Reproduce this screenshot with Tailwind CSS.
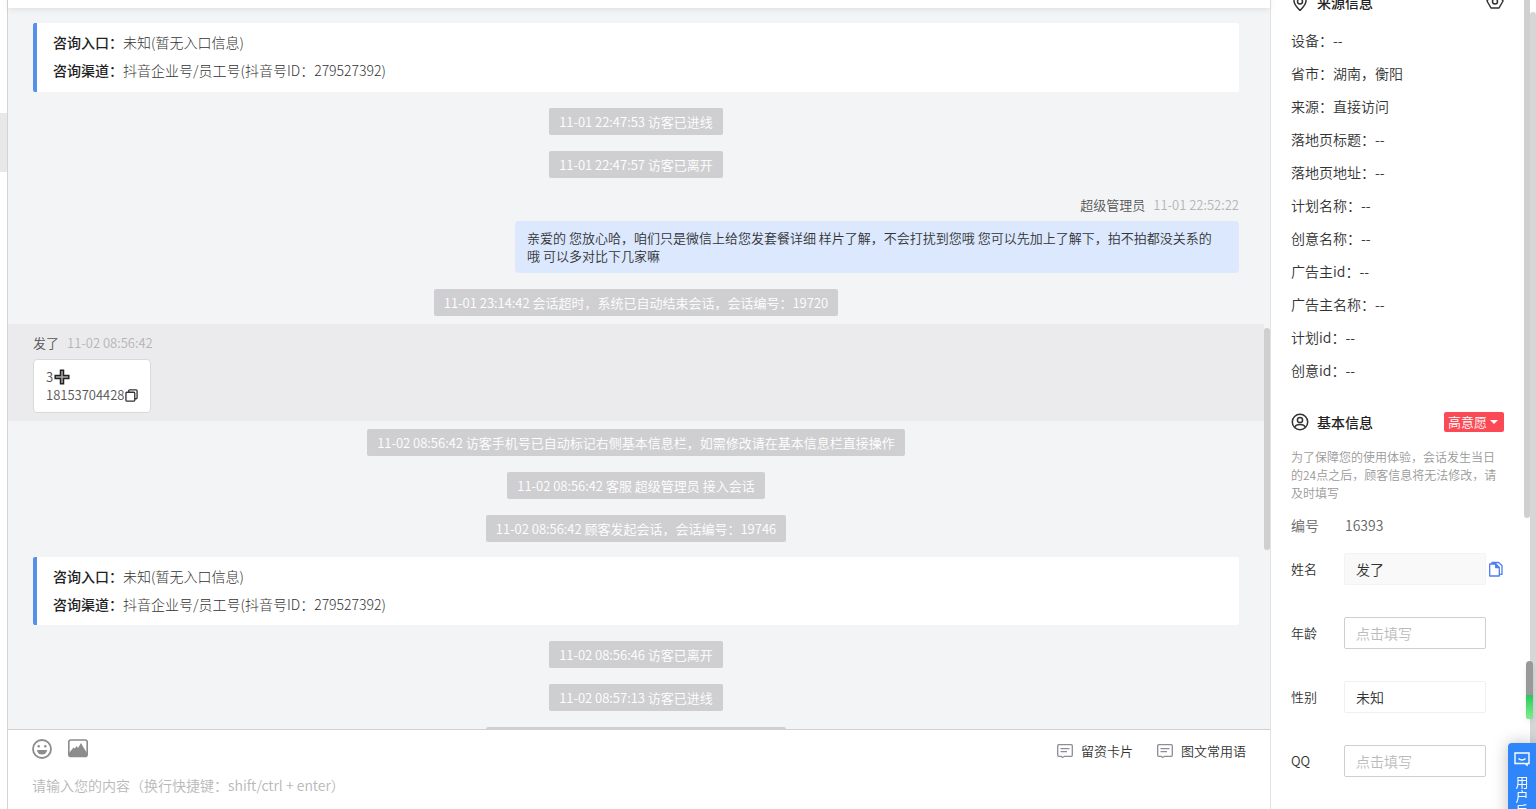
<!DOCTYPE html>
<html lang="zh-CN">
<head>
    <meta charset="UTF-8">
    <meta name="viewport" content="width=device-width, initial-scale=1.0">
    <title>在线客服</title>
    <script src="https://cdn.jsdelivr.net/npm/@tailwindcss/browser@4"></script>
</head>
<body class="h-screen overflow-hidden bg-white font-['Noto_Sans_CJK_SC',sans-serif] text-sm font-[350] text-[#333]">
    <div class="flex h-full">

        <!-- Conversation list edge -->
        <aside class="w-2 shrink-0 border-r border-[#d4d4d4] pt-[113px]">
            <div class="h-[59px] bg-[#e8e8e8]"></div>
        </aside>

        <main class="flex min-w-0 flex-1 flex-col">
            <header class="z-10 h-2 shrink-0 bg-white shadow-[0_1px_6px_rgba(0,0,0,0.1)]"></header>

            <!-- Messages -->
            <section class="relative min-h-0 flex-1 overflow-hidden bg-[#f3f4f6] pt-[15px] text-[13px] leading-[18px]">
                <div class="flex flex-col pr-[6px]">
                    <div class="mx-[25px] mb-2 rounded-xs border-l-4 border-[#5690ea] bg-white px-4 pt-[5px] pb-2 text-sm leading-7 font-light">
                        <p><b class="font-medium text-[#222]">咨询入口：</b>未知(暂无入口信息)</p>
                        <p><b class="font-medium text-[#222]">咨询渠道：</b>抖音企业号/员工号(抖音号ID：279527392)</p>
                    </div>
                    <div class="my-2 self-center rounded-xs bg-[#cfcfd1] px-[10px] pt-[5px] pb-1 text-white">11-01 22:47:53 访客已进线</div>
                    <div class="my-2 self-center rounded-xs bg-[#cfcfd1] px-[10px] pt-[5px] pb-1 text-white">11-01 22:47:57 访客已离开</div>

                    <div class="flex flex-col items-end px-[25px] py-2">
                        <div class="mb-[5px] flex gap-2 leading-[22px]"><span class="text-[#555]">超级管理员</span><time class="text-[#b5b5b5]">11-01 22:52:22</time></div>
                        <p class="max-w-[724px] rounded-sm bg-[#dbe8fe] py-2 pr-5 pl-3">亲爱的 您放心哈，咱们只是微信上给您发套餐详细 样片了解，不会打扰到您哦 您可以先加上了解下，拍不拍都没关系的哦 可以多对比下几家嘛</p>
                    </div>

                    <div class="my-2 self-center rounded-xs bg-[#cfcfd1] px-[10px] pt-[5px] pb-1 text-white">11-01 23:14:42 会话超时，系统已自动结束会话，会话编号：19720</div>

                    <div class="flex flex-col items-start bg-[#ebebed] px-[25px] py-2">
                        <div class="mb-[5px] flex gap-2 leading-[22px]"><span class="text-[#555]">发了</span><time class="text-[#b5b5b5]">11-02 08:56:42</time></div>
                        <div class="rounded-sm border border-[#d9d9d9] bg-white px-3 py-2 text-[#555]">
                            <p class="flex items-center gap-px">3
                                <svg class="size-4" viewBox="0 0 16 16" fill="#aaa" stroke="#222" stroke-width="1.5"><path d="M6.500 1.200h3v5.300h5.300v3H9.500v5.300h-3V9.500H1.200v-3h5.300z"/></svg>
                            </p>
                            <p class="flex items-center">18153704428
                                <button type="button" aria-label="复制">
                                    <svg class="size-[13px]" viewBox="0 0 14 14" fill="none" stroke="#333" stroke-width="1.4" stroke-linejoin="round"><rect x="1" y="3.5" width="9.5" height="9.5" rx="1"/><path d="M4 3.5V2a1 1 0 0 1 1-1h7a1 1 0 0 1 1 1v7.500a1 1 0 0 1-1 1h-1.500"/></svg>
                                </button>
                            </p>
                        </div>
                    </div>

                    <div class="my-2 self-center rounded-xs bg-[#cfcfd1] px-[10px] pt-[5px] pb-1 text-white">11-02 08:56:42 访客手机号已自动标记右侧基本信息栏，如需修改请在基本信息栏直接操作</div>
                    <div class="my-2 self-center rounded-xs bg-[#cfcfd1] px-[10px] pt-[5px] pb-1 text-white">11-02 08:56:42 客服 超级管理员 接入会话</div>
                    <div class="my-2 self-center rounded-xs bg-[#cfcfd1] px-[10px] pt-[5px] pb-1 text-white">11-02 08:56:42 顾客发起会话，会话编号：19746</div>

                    <div class="mx-[25px] mt-[7px] mb-2 rounded-xs border-l-4 border-[#5690ea] bg-white px-4 pt-[5px] pb-[7px] text-sm leading-7 font-light">
                        <p><b class="font-medium text-[#222]">咨询入口：</b>未知(暂无入口信息)</p>
                        <p><b class="font-medium text-[#222]">咨询渠道：</b>抖音企业号/员工号(抖音号ID：279527392)</p>
                    </div>
                    <div class="my-2 self-center rounded-xs bg-[#cfcfd1] px-[10px] pt-[5px] pb-1 text-white">11-02 08:56:46 访客已离开</div>
                    <div class="my-2 self-center rounded-xs bg-[#cfcfd1] px-[10px] pt-[5px] pb-1 text-white">11-02 08:57:13 访客已进线</div>
                    <div class="my-2 self-center rounded-xs bg-[#cfcfd1] px-[10px] pt-[5px] pb-1 text-white">11-02 08:57:13 顾客发起会话，会话编号：19747</div>
                </div>
                <div class="absolute top-80 right-0 h-[222px] w-[6px] rounded-full bg-[#cfcfcf]"></div>
            </section>

            <!-- Composer -->
            <footer class="h-20 shrink-0 border-t border-[#d0d0d0] bg-white px-6">
                <div class="flex h-[38px] items-center justify-between">
                    <div class="flex gap-4">
                        <button type="button" aria-label="表情">
                            <svg class="size-5" viewBox="0 0 20 20" fill="none" stroke="#8c8c8c" stroke-width="1.8"><circle cx="10" cy="10" r="9"/><g fill="#8c8c8c" stroke="none"><circle cx="6.7" cy="7.2" r="1.2"/><circle cx="13.3" cy="7.2" r="1.2"/><path d="M5 11h10a5 4.6 0 0 1-10 0z"/></g></svg>
                        </button>
                        <button type="button" aria-label="图片">
                            <svg class="size-5" viewBox="0 0 20 20" fill="none" stroke="#8c8c8c" stroke-width="1.6"><rect x=".8" y="1" width="18.4" height="16.400" rx="2"/><path fill="#8c8c8c" stroke="none" d="M1 14 5.500 8.500l1.200 1 2-2.500 1.300 2 3-5 2.500 4.500 3.500 5.500v3.500H1z"/></svg>
                        </button>
                    </div>
                    <div class="flex gap-6 pt-1 text-[13px]">
                        <button type="button" class="flex items-center gap-2">
                            <svg class="size-4" viewBox="0 0 16 16" fill="none" stroke="#8b8e96" stroke-width="1.3"><path d="M1.700 1.700h12.600a1 1 0 0 1 1 1v9.600a1 1 0 0 1-1 1H7.500L5.500 14.500l-1.200-1.200H1.700a1 1 0 0 1-1-1V2.700a1 1 0 0 1 1-1zM3.500 5.700h9M3.500 8.700h6.500"/></svg>
                            留资卡片
                        </button>
                        <button type="button" class="flex items-center gap-2">
                            <svg class="size-4" viewBox="0 0 16 16" fill="none" stroke="#8b8e96" stroke-width="1.3"><path d="M1.700 1.700h12.600a1 1 0 0 1 1 1v9.600a1 1 0 0 1-1 1H7.500L5.500 14.500l-1.200-1.200H1.700a1 1 0 0 1-1-1V2.700a1 1 0 0 1 1-1zM3.500 5.700h9M3.500 8.700h6.500"/></svg>
                            图文常用语
                        </button>
                    </div>
                </div>
                <textarea rows="1" aria-label="消息内容" class="mt-[5px] block w-full resize-none text-sm leading-6 outline-none placeholder:text-[#b8b8b8]" placeholder="请输入您的内容（换行快捷键：shift/ctrl + enter）"></textarea>
            </footer>
        </main>

        <!-- Visitor details -->
        <aside class="flex w-[266px] shrink-0 overflow-hidden border-l border-[#e2e2e2]">
            <div class="flex-1 px-5">
                <div class="-mt-[9px] flex items-center justify-between leading-[22px]">
                    <h2 class="flex items-center gap-2 font-medium text-[#222]">
                        <svg class="size-[18px]" viewBox="0 0 18 18" fill="none" stroke="#333" stroke-width="1.5"><path d="M9 17.500C5 13.500 3 11 3 8a6 6 0 0 1 12 0C15 11 13 13.500 9 17.500z"/><circle cx="9" cy="8.500" r="2.500"/></svg>
                        来源信息
                    </h2>
                    <button type="button" aria-label="设置">
                        <svg class="size-[18px]" viewBox="0 0 18 18" fill="none" stroke="#333" stroke-width="1.5" stroke-linejoin="round"><path d="M5 1.500h8l4 6.500-4 7H5L1 8z"/><circle cx="9" cy="8.500" r="2.500"/></svg>
                    </button>
                </div>
                <ul class="mt-[11px] leading-[33px]">
                    <li>设备：--</li>
                    <li>省市：湖南，衡阳</li>
                    <li>来源：直接访问</li>
                    <li>落地页标题：--</li>
                    <li>落地页地址：--</li>
                    <li>计划名称：--</li>
                    <li>创意名称：--</li>
                    <li>广告主id：--</li>
                    <li>广告主名称：--</li>
                    <li>计划id：--</li>
                    <li>创意id：--</li>
                </ul>

                <div class="mt-6 flex items-center justify-between leading-[22px]">
                    <h2 class="flex items-center gap-2 font-medium text-[#222]">
                        <svg class="size-[18px]" viewBox="0 0 18 18" fill="none" stroke="#333" stroke-width="1.5"><circle cx="9" cy="9" r="7.700"/><circle cx="9" cy="7" r="2.600"/><path d="M3.800 14.300c.7-2 2.700-2.800 5.200-2.800s4.500.8 5.200 2.800"/></svg>
                        基本信息
                    </h2>
                    <button type="button" class="flex h-5 items-center gap-[3px] rounded-xs bg-[#fb4a55] pr-[6px] pl-1 text-[13px] text-white">高意愿
                        <svg class="h-1 w-2" viewBox="0 0 8 4" fill="#fff"><path d="M0 0h8L4 4z"/></svg>
                    </button>
                </div>
                <p class="mt-[15px] text-xs leading-[18px] text-[#999]">为了保障您的使用体验，会话发生当日的24点之后，顾客信息将无法修改，请及时填写</p>

                <div class="mt-3 flex items-center leading-[22px] text-[#666]"><span class="w-[54px]">编号</span><span>16393</span></div>
                <form class="mt-[17px] flex flex-col gap-8">
                    <div class="flex items-center">
                        <label for="name" class="w-[53px] pt-px text-[13px]">姓名</label>
                        <input id="name" type="text" value="发了" readonly class="h-8 w-[142px] rounded-xs border border-[#f3f3f3] bg-[#f9f9f9] px-[11px] text-sm outline-none">
                        <button type="button" aria-label="复制姓名" class="ml-[2px]">
                            <svg class="size-4" viewBox="0 0 16 16" fill="none" stroke="#4d7df2" stroke-width="1.3" stroke-linejoin="round"><path d="M1.700 3h6l3.600 3.600v8.400H1.700zM4 3V1.500h6.500L14 4.500v8.800h-2.700"/><path fill="#4d7df2" d="M7.700 3v3.600h3.600z"/></svg>
                        </button>
                    </div>
                    <div class="flex items-center">
                        <label for="age" class="w-[53px] pt-px text-[13px]">年龄</label>
                        <input id="age" type="text" placeholder="点击填写" class="h-8 w-[142px] rounded-xs border border-[#cfcfcf] px-[11px] text-sm outline-none placeholder:text-[#bbb]">
                    </div>
                    <div class="flex items-center">
                        <label for="gender" class="w-[53px] pt-px text-[13px]">性别</label>
                        <select id="gender" class="h-8 w-[142px] appearance-none rounded-xs border border-[#f0f0f0] px-[11px] text-sm outline-none"><option>未知</option><option>男</option><option>女</option></select>
                    </div>
                    <div class="flex items-center">
                        <label for="qq" class="w-[53px] pt-px text-[13px]">QQ</label>
                        <input id="qq" type="text" placeholder="点击填写" class="h-8 w-[142px] rounded-xs border border-[#cfcfcf] px-[11px] text-sm outline-none placeholder:text-[#bbb]">
                    </div>
                </form>
            </div>
            <!-- Panel and page scrollbars -->
            <div class="h-[518px] w-[6px] rounded-b-full bg-[#d0d0d0]"></div>
            <div class="w-[6px] bg-white pt-3"><div class="h-full rounded-t-full bg-[#d6d6d6]"></div></div>
        </aside>
    </div>

    <!-- Floating level meter and feedback tab -->
    <div class="fixed right-[3px] bottom-[90px] z-20 flex h-[58px] w-[7px] flex-col overflow-hidden rounded-full bg-[#999] shadow-md">
        <div class="mt-auto h-6 bg-linear-to-b from-[#1fc95c] to-[#7df08a]"></div>
    </div>
    <button type="button" class="fixed top-[743px] right-0 z-20 flex h-[110px] w-7 flex-col items-center rounded-l-sm bg-[#2f86fa] pt-2 text-[13px] leading-[14px] font-normal text-white shadow-[0_0_16px_rgba(0,0,0,0.25)]">
        <svg class="mb-2 size-4 shrink-0" viewBox="0 0 16 16" fill="none" stroke="#fff" stroke-width="1.4"><path d="M1 2h14v10.500h-2V14l-2-1.500H1zM4.500 7.500c2 2 5 2 7 0"/></svg>
        <span class="w-[13px]">用户反馈</span>
    </button>
</body>
</html>
